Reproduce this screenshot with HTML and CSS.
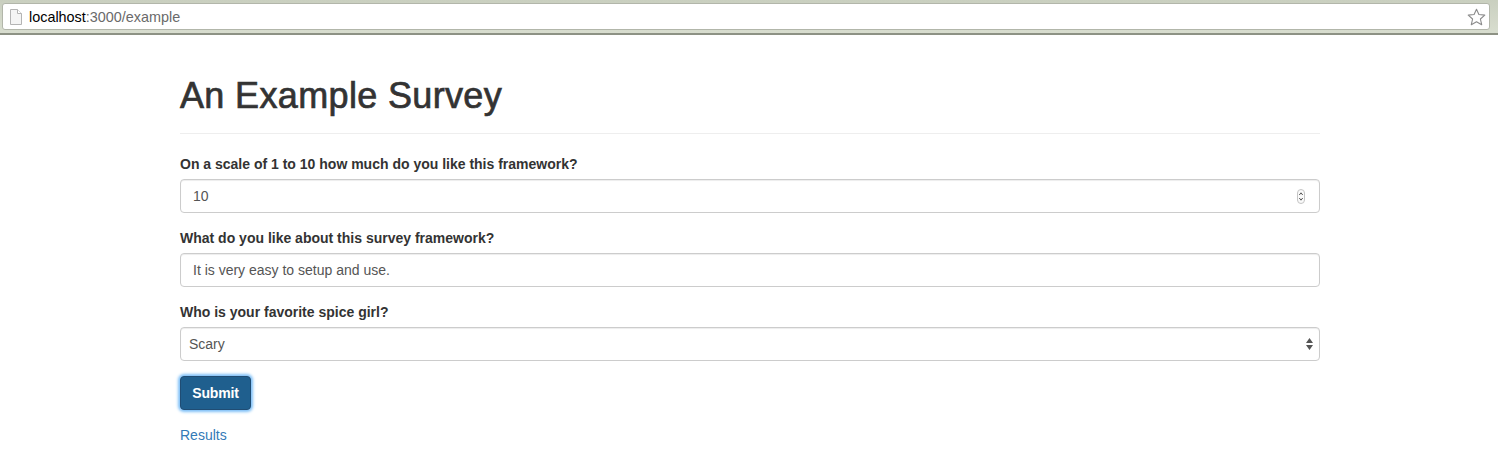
FILE: index.html
```html
<!DOCTYPE html>
<html lang="en">
<head>
<meta charset="utf-8">
<title>An Example Survey</title>
<link rel="stylesheet" href="styles.css">
</head>
<body>
<header class="chrome">
  <div class="omnibox">
    <svg class="page-icon" width="12" height="16" viewBox="0 0 12 16"><path d="M.5.500h7l4 4v11h-11z" fill="#f4f4f4" stroke="#b4b4b4"/><path d="M7.500.5v4h4" fill="#fff" stroke="#b4b4b4"/></svg>
    <span class="url"><span class="host">localhost</span>:3000/example</span>
    <svg class="star" width="19" height="18" viewBox="0 0 19 18"><path d="M9.500 1.200l2.400 5.300 5.900.6-4.400 3.900 1.300 5.700-5.200-3-5.200 3 1.300-5.700-4.400-3.900 5.900-.6z" fill="#fff" stroke="#8b8b8b" stroke-width="1.100" stroke-linejoin="round"/></svg>
  </div>
</header>
<main class="container">
  <h1 class="title">An Example Survey</h1>
  <form class="survey">
    <div class="field">
      <label class="label" for="q1">On a scale of 1 to 10 how much do you like this framework?</label>
      <div class="control-wrap">
        <input class="control" id="q1" type="text" value="10">
        <svg class="spinner" width="8" height="15" viewBox="0 0 8 15"><rect x=".5" y=".5" width="7" height="14" rx="3.500" fill="#fafafa" stroke="#c4c4c4"/><path d="M2.300 6L4 3.800 5.700 6M2.300 9L4 11.200 5.700 9" fill="none" stroke="#555" stroke-width="1"/></svg>
      </div>
    </div>
    <div class="field">
      <label class="label" for="q2">What do you like about this survey framework?</label>
      <div class="control-wrap">
        <input class="control" id="q2" type="text" value="It is very easy to setup and use.">
      </div>
    </div>
    <div class="field">
      <label class="label" for="q3">Who is your favorite spice girl?</label>
      <div class="control-wrap">
        <select class="control select" id="q3"><option>Scary</option></select>
        <svg class="arrows" width="7" height="12" viewBox="0 0 7 12"><path d="M3.500 0L7 5H0zM3.500 12L0 7h7z" fill="#555"/></svg>
      </div>
    </div>
    <button class="submit" type="button">Submit</button>
  </form>
  <a class="results" href="#">Results</a>
</main>
</body>
</html>
```
FILE: styles.css
```css
* { box-sizing: border-box; }
html, body { margin: 0; height: 100%; }
body {
  font-family: "Liberation Sans", Arial, sans-serif;
  font-size: 14px;
  line-height: 20px;
  color: #333;
  background: #fff;
  overflow: hidden;
}
.chrome {
  height: 35px;
  padding: 3px 8px 3px 2px;
  background: linear-gradient(#c9cfbf, #d8ddcf);
  border-bottom: 2px solid #8d9284;
}
.omnibox {
  height: 27px;
  display: flex;
  align-items: center;
  padding: 0 3px 0 7px;
  background: #fff;
  border: 1px solid #b2b6aa;
  border-radius: 3px;
}
.page-icon { flex: none; margin-right: 7px; }
.url { flex: 1; font-size: 14.400px; color: #6a6a6a; }
.host { color: #000; }
.star { flex: none; }
.container { width: 1140px; margin: 0 auto; position: relative; left: 1px; }
.title {
  margin: 0 0 20px;
  padding: 40px 0 16px;
  height: 99px;
  border-bottom: 1px solid #eee;
  font-size: 36px;
  line-height: 42px;
  font-weight: 500;
  letter-spacing: .35px;
  -webkit-text-stroke: .7px #333;
  color: #333;
}
.survey { display: flex; flex-direction: column; align-items: flex-start; }
.field { width: 100%; margin-bottom: 15px; }
.label { display: block; margin-bottom: 5px; font-weight: 700; color: #333; }
.control-wrap { position: relative; }
.control {
  display: block;
  width: 100%;
  height: 34px;
  padding: 6px 12px;
  font: inherit;
  color: #555;
  background: #fff;
  border: 1px solid #ccc;
  border-radius: 4px;
  box-shadow: inset 0 1px 1px rgba(0,0,0,.075);
  outline: none;
}
.select { appearance: none; padding-left: 8px; }
.spinner { position: absolute; right: 15px; top: 10px; }
.arrows { position: absolute; right: 7px; top: 11px; }
.submit {
  height: 34px;
  width: 71px;
  padding: 0;
  font: inherit;
  font-weight: 700;
  letter-spacing: -.15px;
  color: #fff;
  background: #1f5f8e;
  border: 1px solid #204d74;
  border-radius: 4px;
  box-shadow: 0 0 3px 2px #7fc0f7;
  outline: none;
}
.results { display: block; margin-top: 15px; color: #337ab7; text-decoration: none; }
```
